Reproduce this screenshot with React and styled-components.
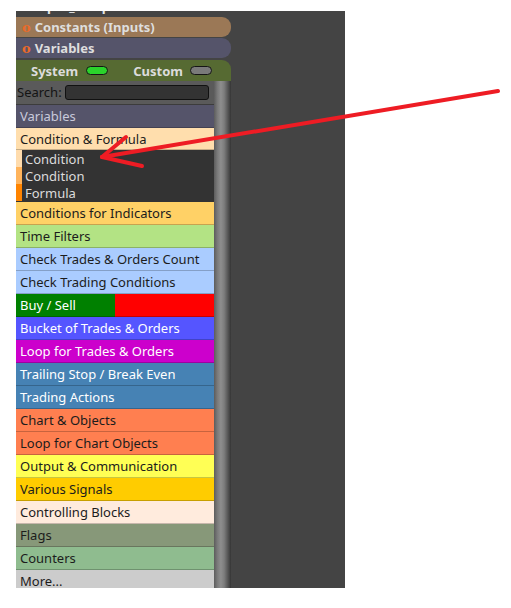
import React from 'react';
import styled, { createGlobalStyle } from 'styled-components';

const Global = createGlobalStyle`
  html, body { margin: 0; padding: 0; background: #ffffff; }
  body { font-family: "Noto Sans", "Open Sans", sans-serif; }
  * { box-sizing: border-box; }
`;

const Page = styled.div`
  position: relative;
  width: 511px;
  height: 608px;
  padding: 11px 0 0 16px;
`;

const Panel = styled.div`
  width: 329px;
  height: 577px;
  background: #444444;
  overflow: hidden;
`;

const Sidebar = styled.div`
  width: 215px;
  height: 100%;
  display: flex;
  flex-direction: column;
`;

const ClippedGroup = styled.div`
  height: 5px;
  overflow: hidden;
  margin-bottom: 1px;
`;

const ClippedLabel = styled.div`
  margin-top: -14px;
  height: 19px;
  line-height: 19px;
  padding-left: 6px;
  font-size: 13px;
  font-weight: 700;
  color: #e6e6e6;
  white-space: nowrap;
`;

const GroupPill = styled.div`
  height: 20px;
  display: flex;
  align-items: center;
  padding-left: 6px;
  margin-bottom: ${p => p.$gap}px;
  background: ${p => p.$bg};
  border-radius: 0 9px 9px 0;
  font-size: 13px;
  font-weight: 700;
  color: #dedede;
  white-space: nowrap;
`;

const Bullet = styled.span`
  font-family: "DejaVu Serif", "Liberation Serif", serif;
  font-weight: 700;
  font-size: 13px;
  color: #ea6a2a;
  margin-right: 4px;
`;

const ModeBar = styled.div`
  height: 21px;
  display: flex;
  align-items: center;
  padding: 0 19px 0 15px;
  background: #566a32;
  border-radius: 0 9px 0 0;
  font-size: 13px;
  font-weight: 700;
  color: #dcdcdc;
`;

const ModeOption = styled.div`
  display: flex;
  align-items: center;
  gap: ${p => p.$gap}px;
  margin-left: ${p => (p.$right ? 'auto' : '0')};
`;

const Toggle = styled.span`
  display: inline-block;
  width: 22px;
  height: 9px;
  border-radius: 5px;
  border: 1px solid #151515;
  background: ${p => (p.$on ? '#2bd32b' : '#7a7a7a')};
`;

const Body = styled.div`
  flex: 1;
  min-height: 0;
  display: flex;
`;

const List = styled.div`
  width: 198px;
  display: flex;
  flex-direction: column;
  overflow: hidden;
`;

const Scrollbar = styled.div`
  width: 17px;
  background: linear-gradient(
    to right,
    #5c5c5c 0%,
    #7a7a7a 20%,
    #8e8e8e 40%,
    #7c7c7c 60%,
    #505050 85%,
    #353535 100%
  );
`;

const SearchRow = styled.div`
  height: 24px;
  flex: none;
  display: flex;
  align-items: center;
  padding: 0 5px 1px 1px;
  background: #5a5a5a;
  font-size: 13px;
  color: #141414;
  border-bottom: 1px solid #3c3c3c;
`;

const SearchField = styled.div`
  flex: 1;
  height: 15px;
  margin-left: 3px;
  background: #333333;
  border: 1px solid #111111;
  border-radius: 3px;
`;

const Row = styled.div`
  height: ${p => p.$h || 23}px;
  flex: none;
  display: flex;
  align-items: center;
  padding-left: 4px;
  background: ${p => p.$bg};
  color: ${p => p.$fg || '#1c1c1c'};
  font-size: 13px;
  white-space: nowrap;
  border-bottom: 1px solid rgba(0, 0, 0, 0.22);
`;

const SplitRow = styled(Row)`
  background: linear-gradient(to right, #008000 0, #008000 99px, #ff0000 99px);
`;

const SubMenu = styled.div`
  flex: none;
  display: flex;
  flex-direction: column;
  padding-bottom: 1px;
  background: #333333;
`;

const SubItem = styled.div`
  height: 17px;
  display: flex;
  align-items: center;
  border-left: 6px solid ${p => p.$mark};
  padding-left: 3px;
  font-size: 13px;
  color: #dcdcdc;
  white-space: nowrap;
`;

const Pointer = styled.svg`
  position: absolute;
  left: 0;
  top: 0;
  pointer-events: none;
`;

const categories = [
  { label: 'Conditions for Indicators', bg: '#ffd166' },
  { label: 'Time Filters', bg: '#b3e384' },
  { label: 'Check Trades & Orders Count', bg: '#aaccff' },
  { label: 'Check Trading Conditions', bg: '#aaccff' },
  { label: 'Buy / Sell', split: true, fg: '#ffffff' },
  { label: 'Bucket of Trades & Orders', bg: '#5555ff', fg: '#ffffff' },
  { label: 'Loop for Trades & Orders', bg: '#cc00cc', fg: '#ffffff' },
  { label: 'Trailing Stop / Break Even', bg: '#4682b4', fg: '#ffffff' },
  { label: 'Trading Actions', bg: '#4682b4', fg: '#ffffff' },
  { label: 'Chart & Objects', bg: '#ff7f50' },
  { label: 'Loop for Chart Objects', bg: '#ff7f50' },
  { label: 'Output & Communication', bg: '#ffff55' },
  { label: 'Various Signals', bg: '#ffcc00' },
  { label: 'Controlling Blocks', bg: '#ffebdd' },
  { label: 'Flags', bg: '#879879' },
  { label: 'Counters', bg: '#8fbc8f' },
  { label: 'More...', bg: '#cccccc' },
];

const subItems = [
  { label: 'Condition', mark: '#ffdcad' },
  { label: 'Condition', mark: '#ffb45c' },
  { label: 'Formula', mark: '#ff8400' },
];

export default function App() {
  return (
    <>
      <Global />
      <Page>
        <Panel>
          <Sidebar>
            <ClippedGroup>
              <ClippedLabel>o Input_Templates</ClippedLabel>
            </ClippedGroup>
            <GroupPill $bg="#9b7856" $gap={1}>
              <Bullet>o</Bullet>Constants (Inputs)
            </GroupPill>
            <GroupPill $bg="#55546a" $gap={2}>
              <Bullet>o</Bullet>Variables
            </GroupPill>
            <ModeBar>
              <ModeOption $gap={8}>
                System <Toggle $on />
              </ModeOption>
              <ModeOption $gap={7} $right>
                Custom <Toggle />
              </ModeOption>
            </ModeBar>
            <Body>
              <List>
                <SearchRow>
                  Search:
                  <SearchField />
                </SearchRow>
                <Row $bg="#55546a" $fg="#c9cadb">Variables</Row>
                <Row $bg="#ffdead" $h={22}>Condition &amp; Formula</Row>
                <SubMenu>
                  {subItems.map((s, i) => (
                    <SubItem key={i} $mark={s.mark}>{s.label}</SubItem>
                  ))}
                </SubMenu>
                {categories.map(c =>
                  c.split ? (
                    <SplitRow key={c.label} $fg={c.fg}>{c.label}</SplitRow>
                  ) : (
                    <Row key={c.label} $bg={c.bg} $fg={c.fg}>{c.label}</Row>
                  )
                )}
              </List>
              <Scrollbar />
            </Body>
          </Sidebar>
        </Panel>
        <Pointer width="511" height="608" viewBox="0 0 511 608">
          <g stroke="#ee1c24" strokeWidth="4" strokeLinecap="round" fill="none">
            <line x1="498" y1="91" x2="102" y2="157" />
            <line x1="102" y1="157" x2="126" y2="137" />
            <line x1="102" y1="157" x2="142" y2="166" />
          </g>
        </Pointer>
      </Page>
    </>
  );
}
